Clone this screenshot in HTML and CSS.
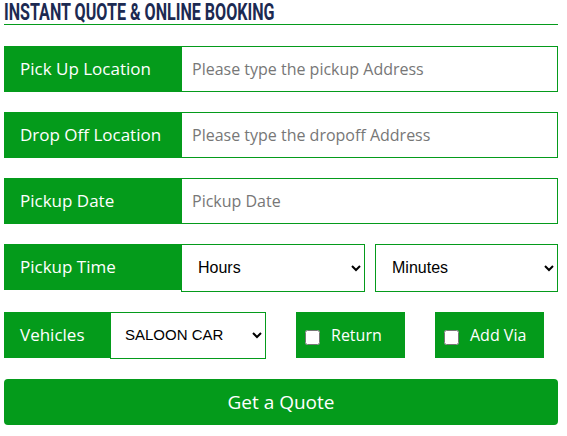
FILE: index.html
```html
<!DOCTYPE html>
<html lang="en">
<head>
    <meta charset="UTF-8">
    <meta name="viewport" content="width=device-width, initial-scale=1.0">
    <title>Instant Quote &amp; Online Booking</title>
    <link rel="stylesheet" href="styles.css">
</head>
<body>
    <div class="booking">
        <h2 class="booking-title"><span class="title-text">INSTANT QUOTE &amp; ONLINE BOOKING</span></h2>
        <form class="quote-form">
            <div class="form-row">
                <label class="field-label" for="pickup">Pick Up Location</label>
                <input type="text" id="pickup" class="field-input" placeholder="Please type the pickup Address">
            </div>
            <div class="form-row">
                <label class="field-label" for="dropoff">Drop Off Location</label>
                <input type="text" id="dropoff" class="field-input" placeholder="Please type the dropoff Address">
            </div>
            <div class="form-row">
                <label class="field-label" for="pickup-date">Pickup Date</label>
                <input type="text" id="pickup-date" class="field-input" placeholder="Pickup Date">
            </div>
            <div class="form-row">
                <label class="field-label" for="hours">Pickup Time</label>
                <select id="hours" class="field-select hours-select">
                    <option>Hours</option>
                </select>
                <select id="minutes" class="field-select minutes-select">
                    <option>Minutes</option>
                </select>
            </div>
            <div class="form-row">
                <label class="field-label vehicles-label" for="vehicle">Vehicles</label>
                <select id="vehicle" class="field-select vehicle-select">
                    <option>SALOON CAR</option>
                </select>
                <label class="check-box">
                    <input type="checkbox"> Return
                </label>
                <label class="check-box">
                    <input type="checkbox"> Add Via
                </label>
            </div>
            <button type="submit" class="quote-btn">Get a Quote</button>
        </form>
    </div>
</body>
</html>
```

FILE: styles.css
```css
:root {
    --green: #049b1b;
    --title-color: #1c2a52;
    --placeholder: #777;
}

body {
    margin: 0;
    padding: 0 9px 0 4px;
    font-family: "Open Sans", Arial, sans-serif;
    background-color: #fff;
}

.booking {
    width: 554px;
}

.booking-title {
    margin: 0;
    padding-top: 2px;
    font-family: Roboto, Arial, sans-serif;
    font-size: 23px;
    line-height: 22px;
    font-weight: bold;
    color: var(--title-color);
    border-bottom: 1px solid var(--green);
    white-space: nowrap;
}

/* the source uses a condensed display face, squeeze Roboto to match */
.title-text {
    display: inline-block;
    transform: scaleX(0.7);
    transform-origin: left center;
}

.quote-form {
    margin-top: 21px;
}

.form-row {
    display: flex;
    align-items: flex-start;
    margin-bottom: 20px;
}

.field-label {
    display: flex;
    align-items: center;
    width: 178px;
    height: 46px;
    padding: 0 0 2px 16px;
    box-sizing: border-box;
    background-color: var(--green);
    color: #fff;
    font-size: 17px;
}

.field-input {
    flex-grow: 1;
    height: 46px;
    box-sizing: border-box;
    padding: 0 10px;
    border: 1px solid var(--green);
    border-left: none;
    font-family: "Open Sans", Arial, sans-serif;
    font-size: 16px;
    outline: none;
}

.field-input::placeholder {
    color: var(--placeholder);
}

.field-select {
    height: 48px;
    box-sizing: border-box;
    padding: 0 4px 2px 12px;
    border: 1px solid var(--green);
    border-radius: 0;
    background-color: #fff;
    font-family: Arial, sans-serif;
    font-size: 16px;
    color: #000;
}

.hours-select {
    width: 184px;
    margin-left: -1px;
}

.minutes-select {
    width: 183px;
    margin-left: 10px;
}

.vehicles-label {
    width: 106px;
}

.vehicle-select {
    width: 156px;
    height: 47px;
    padding-left: 10px;
    font-size: 15px;
}

.check-box {
    display: flex;
    align-items: center;
    width: 109px;
    height: 46px;
    margin-left: 30px;
    padding-left: 9px;
    box-sizing: border-box;
    background-color: var(--green);
    color: #fff;
    font-size: 16px;
}

.check-box input {
    width: 15px;
    height: 15px;
    margin: 4px 11px 0 0;
}

.quote-btn {
    display: block;
    width: 100%;
    height: 46px;
    border: none;
    border-radius: 4px;
    background-color: var(--green);
    color: #fff;
    font-family: "Open Sans", Arial, sans-serif;
    font-size: 19px;
    cursor: pointer;
}
```
